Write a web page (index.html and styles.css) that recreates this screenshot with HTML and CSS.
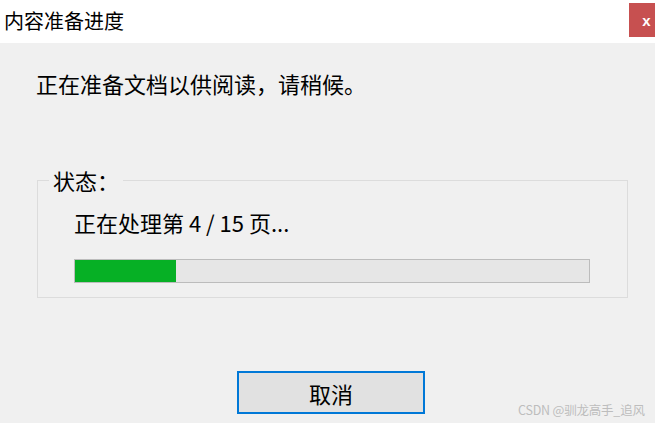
FILE: index.html
```html
<!DOCTYPE html>
<html lang="zh-CN">
<head>
<meta charset="utf-8">
<title>内容准备进度</title>
<link rel="stylesheet" href="styles.css">
</head>
<body>
<div class="window">
  <div class="titlebar">
    <span class="title">内容准备进度</span>
    <div class="close">x</div>
  </div>
  <div class="content">
    <p class="message">正在准备文档以供阅读，请稍候。</p>
    <fieldset class="status">
      <legend class="status-label">状态：</legend>
      <p class="step">正在处理第 4 / 15 页...</p>
      <div class="progress"><div class="fill" style="width: 101px"></div></div>
    </fieldset>
    <div class="actions">
      <button class="cancel" type="button">取消</button>
    </div>
  </div>
  <div class="watermark">CSDN @驯龙高手_追风</div>
</div>
</body>
</html>
```
FILE: styles.css
```css
html, body {
  margin: 0;
  padding: 0;
}
body {
  width: 655px;
  height: 423px;
  overflow: hidden;
  background: #f0f0f0;
  font-family: "Noto Sans CJK SC", "Microsoft YaHei", sans-serif;
  color: #000;
}
.window {
  position: relative;
  width: 655px;
  height: 423px;
}
.titlebar {
  display: flex;
  align-items: flex-start;
  height: 43px;
  background: #fff;
}
.title {
  margin: 11px 0 0 4px;
  font-size: 20px;
  line-height: 20px;
}
.close {
  margin: 3px 0 0 auto;
  width: 26px;
  height: 34px;
  box-sizing: border-box;
  padding-left: 9px;
  display: flex;
  align-items: center;
  justify-content: center;
  background: #c75050;
  color: #fff;
  font-family: "Liberation Sans", Arial, sans-serif;
  font-weight: bold;
  font-size: 15px;
}
.content {
  display: flex;
  flex-direction: column;
}
.message {
  margin: 29px 0 0 36px;
  font-size: 22px;
  line-height: 22px;
}
.status {
  margin: 75px 0 0 37px;
  padding: 0;
  width: 591px;
  box-sizing: border-box;
  border: 1px solid #dcdcdc;
  min-width: 0;
}
.status-label {
  margin-left: 11px;
  padding: 0 4px 0 4px;
  font-size: 22px;
  line-height: 22px;
}
.step {
  margin: 20px 0 0 36px;
  font-size: 22px;
  line-height: 22px;
}
.progress {
  margin: 26px 0 14px 36px;
  width: 516px;
  height: 24px;
  box-sizing: border-box;
  border: 1px solid #bcbcbc;
  background: #e6e6e6;
  display: flex;
}
.fill {
  height: 100%;
  background: #06b025;
}
.actions {
  display: flex;
  margin-top: 73px;
  padding-left: 237px;
}
.cancel {
  width: 188px;
  height: 43px;
  box-sizing: border-box;
  border: 2px solid #0078d7;
  background: #e1e1e1;
  font-family: inherit;
  font-size: 22px;
  line-height: 22px;
  color: #000;
  padding: 0;
  margin: 0;
}
.watermark {
  position: absolute;
  left: 518px;
  top: 402px;
  font-size: 12.5px;
  line-height: 16px;
  letter-spacing: -0.2px;
  color: #bdbdbd;
  white-space: nowrap;
}
```
